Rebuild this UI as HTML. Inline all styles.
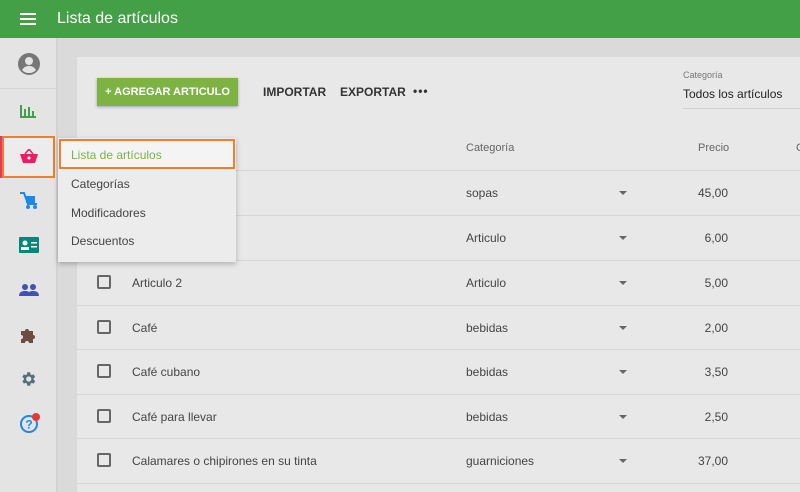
<!DOCTYPE html><html><head><meta charset="utf-8"><style>
*{margin:0;padding:0;box-sizing:border-box}
html{width:800px;height:492px;overflow:hidden;background:#dadada}
body{width:800px;height:492px;overflow:hidden;background:#dadada;font-family:"Liberation Sans",Arial,sans-serif;position:relative;color:#444}
.hdr{position:absolute;left:0;top:0;width:800px;height:38px;background:#43a047;color:#fff}
.hdr .t{position:absolute;left:57px;top:10px;font-size:16px}
.side{position:absolute;left:0;top:38px;width:58px;height:454px;background:#e4e4e4;border-right:2px solid #d2d2d2}
.ic{position:absolute;left:19px}
.card{position:absolute;left:76px;top:57px;width:724px;height:435px;background:#e8e8e8;border-left:1px solid #d8d8d8;overflow:hidden}
.btn{position:absolute;left:20px;top:21px;width:141px;height:28px;background:#7cb342;color:#fff;font-size:11px;font-weight:bold;text-align:center;line-height:28px;box-shadow:0 1px 3px rgba(0,0,0,.3)}
.tb{position:absolute;top:28px;font-size:12px;font-weight:bold;color:#333}
.row{position:absolute;left:0;width:724px;height:45px;border-top:1px solid #d6d6d6;font-size:12px}
.row span{position:absolute;top:15px}
.cb{position:absolute;left:20px;top:14px;width:14px;height:14px;border:2px solid #666;border-radius:2px}
.arr{position:absolute;left:542px;top:20px;width:0;height:0;border-left:4px solid transparent;border-right:4px solid transparent;border-top:4px solid #666}
.pr{right:73px;text-align:right}
.menu{position:absolute;left:58px;top:138px;width:178px;height:124px;background:#ececec;box-shadow:0 2px 5px rgba(0,0,0,.25);font-size:12px}
.menu div{position:absolute;left:13px}
</style></head><body>
<div class="hdr"><svg style="position:absolute;left:20px;top:12px" width="16" height="14"><rect y="1" width="16" height="2" fill="#fff"/><rect y="6" width="16" height="2" fill="#fff"/><rect y="11" width="16" height="2" fill="#fff"/></svg><div class="t">Lista de artículos</div></div>
<div class="side">
<svg class="ic" style="top:14px;left:17px" width="24" height="24" viewBox="0 0 24 24"><circle cx="12" cy="12" r="11" fill="#777"/><circle cx="12" cy="9" r="4" fill="#e4e4e4"/><path d="M5 18c2-3 4-4 7-4s5 1 7 4c-2 2-4 3-7 3s-5-1-7-3z" fill="#e4e4e4"/></svg>
<div style="position:absolute;left:0;top:50px;width:58px;height:1px;background:#d4d4d4"></div>
<svg class="ic" style="top:65px" width="18" height="16"><rect x="1" y="2" width="2" height="13" fill="#43a047"/><rect x="1" y="13" width="16" height="2" fill="#43a047"/><rect x="5" y="6" width="2" height="7" fill="#43a047"/><rect x="9" y="4" width="2" height="9" fill="#43a047"/><rect x="13" y="8" width="2" height="5" fill="#43a047"/></svg>
<div style="position:absolute;left:0;top:98px;width:4px;height:42px;background:#e53958"></div>
<div style="position:absolute;left:2px;top:98px;width:53px;height:42px;border:2px solid #f07f2c;background:#ececec"></div>
<svg class="ic" style="top:111px;left:20px" width="18" height="14" viewBox="0 0 18 14"><path d="M5 5L9 0l4 5" stroke="#e91e63" stroke-width="1.5" fill="none"/><path d="M0 5h18l-3 9H3z" fill="#e91e63"/><circle cx="9" cy="9" r="1.5" fill="#fff"/></svg>
<svg class="ic" style="top:153px" width="20" height="18"><path d="M1 2h4l4 11h9" stroke="#1e88e5" stroke-width="2" fill="none"/><rect x="7" y="5" width="9" height="7" fill="#1e88e5"/><circle cx="9" cy="16" r="2" fill="#1e88e5"/><circle cx="16" cy="16" r="2" fill="#1e88e5"/></svg>
<svg class="ic" style="top:199px" width="20" height="16"><rect width="20" height="16" rx="1" fill="#00897b"/><circle cx="6" cy="6" r="2.5" fill="#fff"/><rect x="2" y="10" width="8" height="3" fill="#fff"/><rect x="12" y="5" width="6" height="1.5" fill="#fff"/><rect x="12" y="9" width="6" height="1.5" fill="#fff"/></svg>
<svg class="ic" style="top:246px" width="20" height="12"><circle cx="6" cy="3" r="3" fill="#3f51b5"/><circle cx="14" cy="3" r="3" fill="#3f51b5"/><path d="M0 12c0-4 3-5 6-5s6 1 6 5zM9 12c0-4 2-5 5-5s6 1 6 5z" fill="#3f51b5"/></svg>
<svg class="ic" style="top:288px" width="18" height="18"><path d="M2 5h4a2 2 0 014 0h4v4a2 2 0 010 4v4H10a2 2 0 00-4 0H2v-4a2 2 0 000-4z" fill="#6d4c41"/></svg>
<svg class="ic" style="top:332px" width="18" height="18" viewBox="0 0 24 24"><path fill="#546e7a" d="M19.4 13a7 7 0 000-2l2.1-1.6-2-3.5-2.5 1a7 7 0 00-1.7-1L15 3h-4l-.4 2.9a7 7 0 00-1.7 1l-2.5-1-2 3.5L6.6 11a7 7 0 000 2l-2.1 1.6 2 3.5 2.5-1a7 7 0 001.7 1L11 21h4l.4-2.9a7 7 0 001.7-1l2.5 1 2-3.5zM13 15.5a3.5 3.5 0 110-7 3.5 3.5 0 010 7z"/></svg>
<svg class="ic" style="top:374px" width="22" height="22"><circle cx="10" cy="12" r="8" stroke="#1e88e5" stroke-width="2" fill="none"/><text x="10" y="16.5" font-size="12" font-weight="bold" fill="#1e88e5" text-anchor="middle" font-family="Liberation Sans">?</text><circle cx="17" cy="5" r="4" fill="#e53935"/></svg>
</div>
<div class="card">
<div class="btn">+ AGREGAR ARTICULO</div>
<div class="tb" style="left:186px">IMPORTAR</div>
<div class="tb" style="left:263px">EXPORTAR</div>
<div class="tb" style="left:336px;top:27px;letter-spacing:1px">•••</div>
<div style="position:absolute;left:606px;top:13px;font-size:9px;color:#777">Categoría</div>
<div style="position:absolute;left:606px;top:30px;font-size:12px;color:#222">Todos los artículos</div>
<div style="position:absolute;left:606px;top:51px;width:118px;height:1px;background:#d0d0d0"></div>
<div style="position:absolute;left:389px;top:85px;font-size:11px;color:#666">Categoría</div>
<div style="position:absolute;left:621px;top:85px;font-size:11px;color:#666">Precio</div>
<div style="position:absolute;left:719px;top:85px;font-size:11px;color:#666">C</div>
<div class="row" style="top:113px"><span style="left:389px">sopas</span><div class="arr"></div><span class="pr">45,00</span></div>
<div class="row" style="top:158px"><span style="left:389px">Articulo</span><div class="arr"></div><span class="pr">6,00</span></div>
<div class="row" style="top:203px"><div class="cb"></div><span style="left:55px">Articulo 2</span><span style="left:389px">Articulo</span><div class="arr"></div><span class="pr">5,00</span></div>
<div class="row" style="top:248px"><div class="cb"></div><span style="left:55px">Café</span><span style="left:389px">bebidas</span><div class="arr"></div><span class="pr">2,00</span></div>
<div class="row" style="top:292px"><div class="cb"></div><span style="left:55px">Café cubano</span><span style="left:389px">bebidas</span><div class="arr"></div><span class="pr">3,50</span></div>
<div class="row" style="top:337px"><div class="cb"></div><span style="left:55px">Café para llevar</span><span style="left:389px">bebidas</span><div class="arr"></div><span class="pr">2,50</span></div>
<div class="row" style="top:381px;height:45px"><div class="cb"></div><span style="left:55px">Calamares o chipirones en su tinta</span><span style="left:389px">guarniciones</span><div class="arr"></div><span class="pr">37,00</span></div>
<div style="position:absolute;left:0;top:426px;width:724px;height:1px;background:#d6d6d6"></div>
</div>
<div class="menu">
<div style="left:1px;top:1px;width:176px;height:30px;border:2px solid #f07f2c;background:#f4f4f4"></div>
<div style="top:10px;color:#7cb342">Lista de artículos</div>
<div style="top:39px">Categorías</div>
<div style="top:68px">Modificadores</div>
<div style="top:96px">Descuentos</div>
</div>
</body></html>
